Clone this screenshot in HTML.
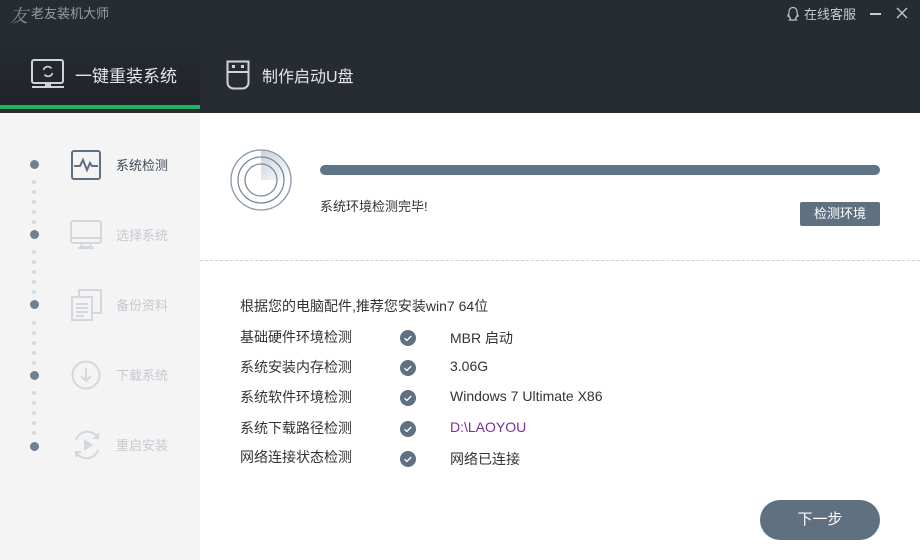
<!DOCTYPE html>
<html><head><meta charset="utf-8"><style>
*{margin:0;padding:0;box-sizing:border-box}
body{width:920px;height:560px;overflow:hidden;background:#fff;font-family:"Liberation Sans","Noto Sans CJK SC",sans-serif;position:relative}
.abs{position:absolute}
#hdr{left:0;top:0;width:920px;height:113px;background:#272c33}
#tab1{left:0;top:36px;width:200px;height:74px;background:linear-gradient(#272c33,#1f2328)}
#green{left:0;top:105px;width:200px;height:4px;background:#1fb35f}
#side{left:0;top:113px;width:200px;height:447px;background:#f4f4f5}
.t{color:#333;font-size:14px;white-space:nowrap}
.dot{width:9px;height:9px;border-radius:50%;background:#6f8193;left:30px}
.sd{width:4px;height:4px;border-radius:50%;background:#d5d9dd;left:32px}
</style></head><body>
<div id="hdr" class="abs"></div>
<div id="tab1" class="abs"></div>
<div id="green" class="abs"></div>
<div class="abs" style="left:10px;top:2px;color:#8a8e94;font-size:18px;font-style:italic;font-family:'Noto Serif CJK SC',serif">友</div>
<div class="abs" style="left:31px;top:3px;color:#9a9ea4;font-size:13px">老友装机大师</div>
<svg class="abs" style="left:785px;top:6px" width="16" height="16" viewBox="0 0 16 16"><path d="M8 1.5c-2.5 0-4 1.8-4 4.2v1.5L2.8 10c.3.6 1 .4 1.3 0 .2 1 .8 1.8 1.4 2.2L4.5 14h7l-1-1.8c.6-.4 1.2-1.2 1.4-2.2.3.4 1 .6 1.3 0L12 7.2V5.7c0-2.4-1.5-4.2-4-4.2z" fill="none" stroke="#bfc3c8" stroke-width="1.2"/></svg>
<div class="abs" style="left:804px;top:4px;color:#c8ccd1;font-size:13px">在线客服</div>
<div class="abs" style="left:870px;top:13px;width:11px;height:1.5px;background:#c8ccd1"></div>
<svg class="abs" style="left:896px;top:7px" width="12" height="12"><path d="M1 1L11 11M11 1L1 11" stroke="#c8ccd1" stroke-width="1.3"/></svg>
<svg class="abs" style="left:31px;top:59px" width="34" height="31" viewBox="0 0 34 31"><rect x="1" y="1" width="31" height="23" rx="2" fill="none" stroke="#d0d3d7" stroke-width="2"/><rect x="14" y="24" width="6" height="3" fill="#d0d3d7"/><rect x="1" y="27" width="32" height="2" fill="#d0d3d7"/><path d="M12.5 11a4.5 4.5 0 0 1 8-1.5M21.5 14a4.5 4.5 0 0 1-8 1.5" fill="none" stroke="#d0d3d7" stroke-width="1.6"/></svg>
<div class="abs" style="left:75px;top:62px;color:#e4e6e9;font-size:17px">一键重装系统</div>
<svg class="abs" style="left:226px;top:60px" width="24" height="30" viewBox="0 0 24 30"><path d="M1.5 1.5h21v21a6 6 0 0 1-6 6h-9a6 6 0 0 1-6-6z" fill="none" stroke="#d0d3d7" stroke-width="2"/><path d="M1.5 12h21" stroke="#d0d3d7" stroke-width="2"/><rect x="6" y="5" width="3" height="3" fill="#d0d3d7"/><rect x="15" y="5" width="3" height="3" fill="#d0d3d7"/></svg>
<div class="abs" style="left:262px;top:63px;color:#e4e6e9;font-size:16px">制作启动U盘</div>

<div id="side" class="abs"></div>
<div class="abs dot" style="top:160px"></div>
<div class="abs dot" style="top:230px"></div>
<div class="abs dot" style="top:300px"></div>
<div class="abs dot" style="top:371px"></div>
<div class="abs dot" style="top:442px"></div>
<div class="abs" style="left:0;top:0">
<div class="abs sd" style="top:180px"></div><div class="abs sd" style="top:190px"></div><div class="abs sd" style="top:200px"></div><div class="abs sd" style="top:210px"></div><div class="abs sd" style="top:220px"></div>
<div class="abs sd" style="top:250px"></div><div class="abs sd" style="top:260px"></div><div class="abs sd" style="top:270px"></div><div class="abs sd" style="top:280px"></div><div class="abs sd" style="top:290px"></div>
<div class="abs sd" style="top:321px"></div><div class="abs sd" style="top:331px"></div><div class="abs sd" style="top:341px"></div><div class="abs sd" style="top:351px"></div><div class="abs sd" style="top:361px"></div>
<div class="abs sd" style="top:391px"></div><div class="abs sd" style="top:401px"></div><div class="abs sd" style="top:411px"></div><div class="abs sd" style="top:421px"></div><div class="abs sd" style="top:431px"></div>
</div>
<svg class="abs" style="left:71px;top:150px" width="30" height="30"><rect x="1" y="1" width="28" height="28" rx="2" fill="none" stroke="#5f7080" stroke-width="2"/><path d="M3 16h6l3-6 4 10 3-7 2 3h6" fill="none" stroke="#5f7080" stroke-width="2"/></svg>
<div class="abs t" style="left:116px;top:155px;color:#3d4a58;font-size:13px">系统检测</div>
<svg class="abs" style="left:70px;top:220px" width="32" height="30"><rect x="1" y="1" width="30" height="22" rx="2" fill="none" stroke="#d3d8de" stroke-width="2"/><path d="M1 18h30M12 23l-1 4h10l-1-4M8 28h16" stroke="#d3d8de" stroke-width="2" fill="none"/></svg>
<div class="abs t" style="left:116px;top:225px;color:#c5cad1;font-size:13px">选择系统</div>
<svg class="abs" style="left:71px;top:289px" width="32" height="32"><rect x="8" y="1" width="22" height="23" fill="none" stroke="#d3d8de" stroke-width="2"/><rect x="1" y="8" width="20" height="23" fill="#f4f4f5" stroke="#d3d8de" stroke-width="2"/><path d="M5 15h12M5 19h12M5 23h12M5 27h8" stroke="#d3d8de" stroke-width="2"/></svg>
<div class="abs t" style="left:116px;top:295px;color:#c5cad1;font-size:13px">备份资料</div>
<svg class="abs" style="left:71px;top:360px" width="30" height="30"><circle cx="15" cy="15" r="13.5" fill="none" stroke="#d3d8de" stroke-width="2"/><path d="M15 8v13M10 16l5 5 5-5" fill="none" stroke="#d3d8de" stroke-width="2"/></svg>
<div class="abs t" style="left:116px;top:365px;color:#c5cad1;font-size:13px">下载系统</div>
<svg class="abs" style="left:70px;top:428px" width="34" height="34"><path d="M6 12a12 12 0 0 1 22-2M28 22a12 12 0 0 1-22 2" fill="none" stroke="#d3d8de" stroke-width="2"/><path d="M28 5v5h-5M6 29v-5h5" fill="none" stroke="#d3d8de" stroke-width="2"/><path d="M14 11l9 6-9 6z" fill="#d3d8de"/></svg>
<div class="abs t" style="left:116px;top:435px;color:#c5cad1;font-size:13px">重启安装</div>

<svg class="abs" style="left:229px;top:148px" width="64" height="64"><defs><linearGradient id="g" x1="0" y1="0" x2="1" y2="1"><stop offset="0" stop-color="#c7d0d9"/><stop offset="1" stop-color="#fff"/></linearGradient></defs><path d="M32 32V2A30 30 0 0 1 62 32z" fill="url(#g)"/><circle cx="32" cy="32" r="30" fill="none" stroke="#8a97a5" stroke-width="1.3"/><circle cx="32" cy="32" r="23" fill="none" stroke="#7c8996" stroke-width="1.3"/><circle cx="32" cy="32" r="16" fill="none" stroke="#7c8996" stroke-width="1.3"/></svg>
<div class="abs" style="left:320px;top:165px;width:560px;height:10px;border-radius:5px;background:#5f7585"></div>
<div class="abs t" style="left:320px;top:196px;font-size:13px">系统环境检测完毕!</div>
<div class="abs" style="left:800px;top:202px;width:80px;height:24px;background:#5f7080;color:#fff;font-size:13px;text-align:center;line-height:23px;border-radius:2px">检测环境</div>
<div class="abs" style="left:200px;top:260px;width:720px;border-top:1px dashed #cfcfcf"></div>
<div class="abs t" style="left:240px;top:296px">根据您的电脑配件,推荐您安装win7 64位</div>
<div class="abs t" style="left:240px;top:327px">基础硬件环境检测</div>
<div class="abs t" style="left:240px;top:357px">系统安装内存检测</div>
<div class="abs t" style="left:240px;top:387px">系统软件环境检测</div>
<div class="abs t" style="left:240px;top:418px">系统下载路径检测</div>
<div class="abs t" style="left:240px;top:447px">网络连接状态检测</div>
<svg width="0" height="0" style="position:absolute"><symbol id="ck" viewBox="0 0 16 16"><circle cx="8" cy="8" r="8" fill="#5f7080"/><path d="M4.5 8.2l2.3 2.3 4.5-4.5" fill="none" stroke="#fff" stroke-width="1.3"/></symbol></svg>
<svg class="abs" style="left:400px;top:330px" width="16" height="16"><use href="#ck"/></svg>
<svg class="abs" style="left:400px;top:360px" width="16" height="16"><use href="#ck"/></svg>
<svg class="abs" style="left:400px;top:390px" width="16" height="16"><use href="#ck"/></svg>
<svg class="abs" style="left:400px;top:421px" width="16" height="16"><use href="#ck"/></svg>
<svg class="abs" style="left:400px;top:451px" width="16" height="16"><use href="#ck"/></svg>
<div class="abs t" style="left:450px;top:328px">MBR 启动</div>
<div class="abs t" style="left:450px;top:358px">3.06G</div>
<div class="abs t" style="left:450px;top:388px">Windows 7 Ultimate X86</div>
<div class="abs t" style="left:450px;top:419px;color:#7a2f9e">D:\LAOYOU</div>
<div class="abs t" style="left:450px;top:449px">网络已连接</div>
<div class="abs" style="left:760px;top:500px;width:120px;height:40px;border-radius:20px;background:#5f7080;color:#fff;font-size:15px;text-align:center;line-height:40px">下一步</div>
</body></html>
